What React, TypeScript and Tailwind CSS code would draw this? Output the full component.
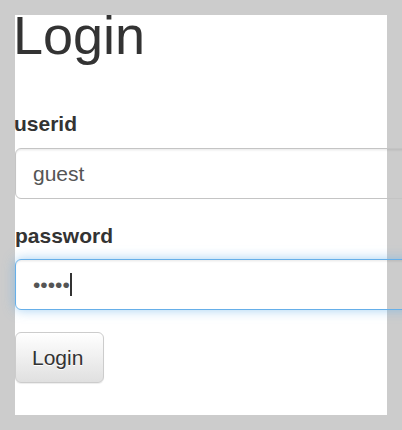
export default function App() {
  return (
    <div
      className="w-[402px] h-[430px] overflow-hidden bg-[#cccccc] pt-[15px] pl-[15px]"
      style={{ fontFamily: '"Liberation Sans", Arial, Helvetica, sans-serif' }}
    >
      <div className="w-[372px] h-[400px] bg-white">
        <h1 className="text-[54px] leading-[40px] font-normal text-[#333333] -ml-[2px]">Login</h1>
        <label className="block mt-[54px] mb-[9px] text-[21px] leading-[30px] font-bold text-[#333333] -ml-px">
          userid
        </label>
        <input
          readOnly
          value="guest"
          className="block w-[430px] h-[51px] pl-[17px] pr-[18px] bg-transparent border border-[#c4c4c4] rounded-[6px] text-[21px] text-[#555555] outline-none shadow-[inset_0_1.5px_1.5px_rgba(0,0,0,0.075)]"
        />
        <label className="block mt-[22px] mb-[8px] text-[21px] leading-[30px] font-bold text-[#333333]">
          password
        </label>
        <div className="flex items-center w-[430px] h-[51px] pl-[17px] bg-transparent border border-[#66afe9] rounded-[6px] text-[21px] text-[#555555] shadow-[inset_0_1.5px_1.5px_rgba(0,0,0,0.075),0_0_12px_rgba(102,175,233,0.6)]">
          <span>•••••</span>
          <span className="w-[2px] h-[23px] bg-[#333333]" />
        </div>
        <button className="block mt-[22px] w-[89px] h-[51px] pl-[16px] text-left border border-[#cccccc] rounded-[6px] bg-gradient-to-b from-white to-[#e0e0e0] text-[21px] text-[#333333] [text-shadow:0_1px_0_#fff] shadow-[inset_0_1px_0_rgba(255,255,255,0.15),0_1px_1px_rgba(0,0,0,0.075)]">
          Login
        </button>
      </div>
    </div>
  );
}
